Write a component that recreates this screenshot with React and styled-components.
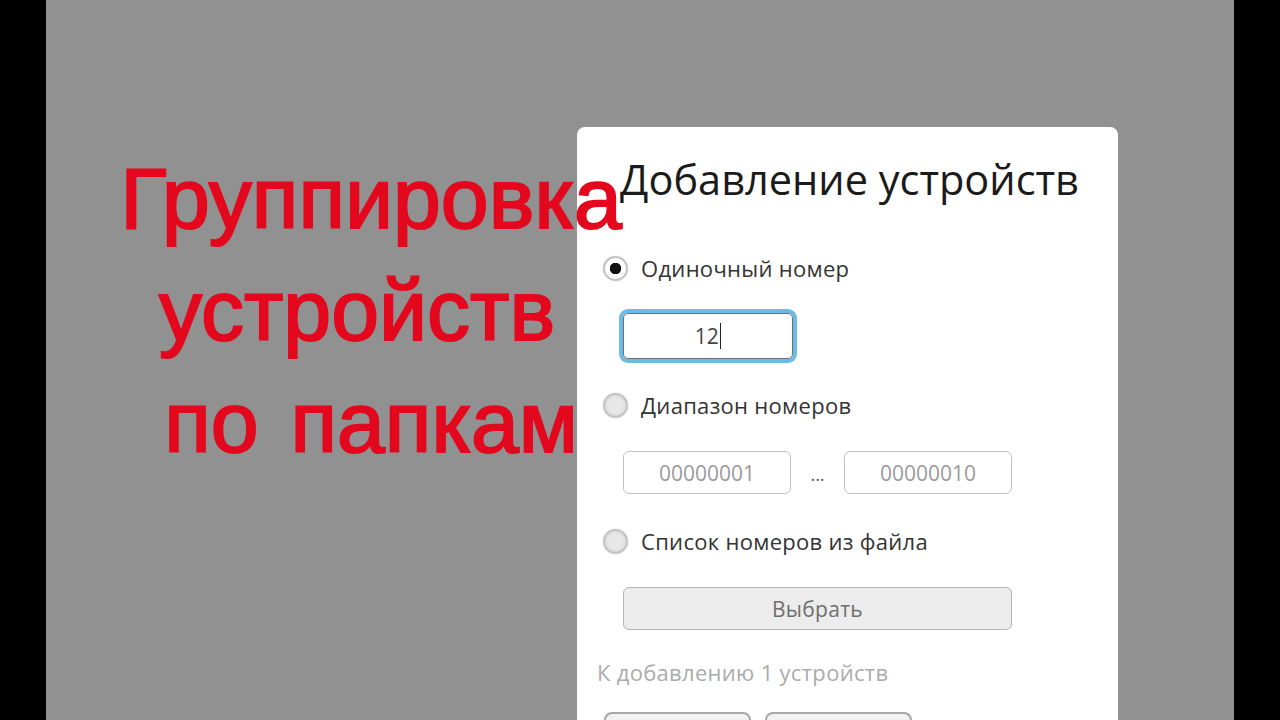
import styled, { createGlobalStyle } from "styled-components";

const GlobalStyle = createGlobalStyle`
  html, body {
    margin: 0;
    padding: 0;
    background: #000;
  }
  body {
    font-family: "Open Sans", "Noto Sans", sans-serif;
  }
`;

function Radio({ checked, label }) {
  return (
    <RadioRow>
      <RadioCircle $checked={checked} />
      <RadioLabel>{label}</RadioLabel>
    </RadioRow>
  );
}

function App() {
  return (
    <>
      <GlobalStyle />
      <Stage>
        <Dialog>
          <Title>Добавление устройств</Title>
          <Radio checked label="Одиночный номер" />
          <SingleBlock>
            <FocusInput>
              12<Caret />
            </FocusInput>
          </SingleBlock>
          <Radio label="Диапазон номеров" />
          <FieldRow>
            <NumberField>00000001</NumberField>
            <Dots>...</Dots>
            <NumberField>00000010</NumberField>
          </FieldRow>
          <Radio label="Список номеров из файла" />
          <FieldRow>
            <PickButton>Выбрать</PickButton>
          </FieldRow>
          <Status>К добавлению 1 устройств</Status>
          <Footer>
            <FooterButton />
            <FooterButton />
          </Footer>
        </Dialog>
        <Caption>
          <CaptionLine $shift={4}>Группировка</CaptionLine>
          <CaptionLine $shift={-10}>устройств</CaptionLine>
          <CaptionLine $shift={4}>по папкам</CaptionLine>
        </Caption>
      </Stage>
    </>
  );
}

const Stage = styled.div`
  position: relative;
  margin: 0 46px;
  height: 720px;
  background: #919191;
  overflow: hidden;
`;

const Caption = styled.div`
  position: absolute;
  left: 0;
  top: 142px;
  width: 642px;
  text-align: center;
  font-family: "Liberation Sans", Arial, sans-serif;
  font-size: 86px;
  line-height: 112px;
  color: #e3081d;
  -webkit-text-stroke: 2px #e3081d;
  word-spacing: 8px;
`;

const CaptionLine = styled.div`
  position: relative;
  left: ${(p) => p.$shift || 0}px;
  white-space: nowrap;
`;

const Dialog = styled.div`
  margin: 127px 0 0 531px;
  width: 541px;
  height: 700px;
  background: #fff;
  border-radius: 8px 8px 0 0;
  display: flex;
  flex-direction: column;
`;

const Title = styled.div`
  height: 115px;
  box-sizing: border-box;
  padding-top: 28px;
  padding-left: 4px;
  text-align: center;
  font-size: 41.5px;
  line-height: 48px;
  color: #1b1b1b;
`;

const RadioRow = styled.div`
  height: 52px;
  display: flex;
  align-items: center;
  padding-left: 26px;
  gap: 13px;
`;

const RadioCircle = styled.span`
  width: 25px;
  height: 25px;
  box-sizing: border-box;
  border-radius: 50%;
  border: 2px solid #c4c4c4;
  background: ${(p) =>
    p.$checked
      ? "radial-gradient(circle, #111 0 5.5px, #fff 6px)"
      : "radial-gradient(circle, #e8e8e8 0 7px, #dcdcdc 10px)"};
  box-shadow: 0 0 1px #999;
`;

const RadioLabel = styled.span`
  font-size: 22px;
  letter-spacing: 0.3px;
  color: #333;
`;

const SingleBlock = styled.div`
  height: 85px;
  box-sizing: border-box;
  padding: 19px 0 0 46px;
`;

const FocusInput = styled.div`
  width: 170px;
  height: 46px;
  box-sizing: border-box;
  border: 1px solid #6f6f6f;
  border-radius: 5px;
  box-shadow: 0 0 0 4px #6bbbe6;
  display: flex;
  align-items: center;
  justify-content: center;
  font-size: 21px;
  color: #444;
`;

const Caret = styled.span`
  width: 1.5px;
  height: 26px;
  background: #222;
  margin-left: 1px;
`;

const FieldRow = styled.div`
  height: 84px;
  box-sizing: border-box;
  padding: 20px 0 0 46px;
  display: flex;
  align-items: flex-start;
`;

const NumberField = styled.div`
  width: 168px;
  height: 43px;
  box-sizing: border-box;
  border: 1px solid #c2c2c2;
  border-radius: 6px;
  display: flex;
  align-items: center;
  justify-content: center;
  font-size: 21px;
  color: #9a9a9a;
`;

const Dots = styled.span`
  width: 53px;
  height: 43px;
  line-height: 46px;
  text-align: center;
  font-size: 18px;
  color: #555;
`;

const PickButton = styled.div`
  width: 389px;
  height: 43px;
  box-sizing: border-box;
  border: 1px solid #b4b4b4;
  border-radius: 6px;
  background: #ececec;
  display: flex;
  align-items: center;
  justify-content: center;
  font-size: 21px;
  letter-spacing: 0.3px;
  color: #6e6e6e;
`;

const Status = styled.div`
  height: 42px;
  line-height: 42px;
  padding-left: 20px;
  font-size: 22px;
  letter-spacing: 0.3px;
  color: #ababab;
`;

const Footer = styled.div`
  margin-top: 19px;
  padding-left: 27px;
  display: flex;
  gap: 14px;
`;

const FooterButton = styled.div`
  width: 147px;
  height: 43px;
  box-sizing: border-box;
  border: 2px solid #a8a8a8;
  border-radius: 8px;
  background: #f2f2f2;
`;

export default App;
